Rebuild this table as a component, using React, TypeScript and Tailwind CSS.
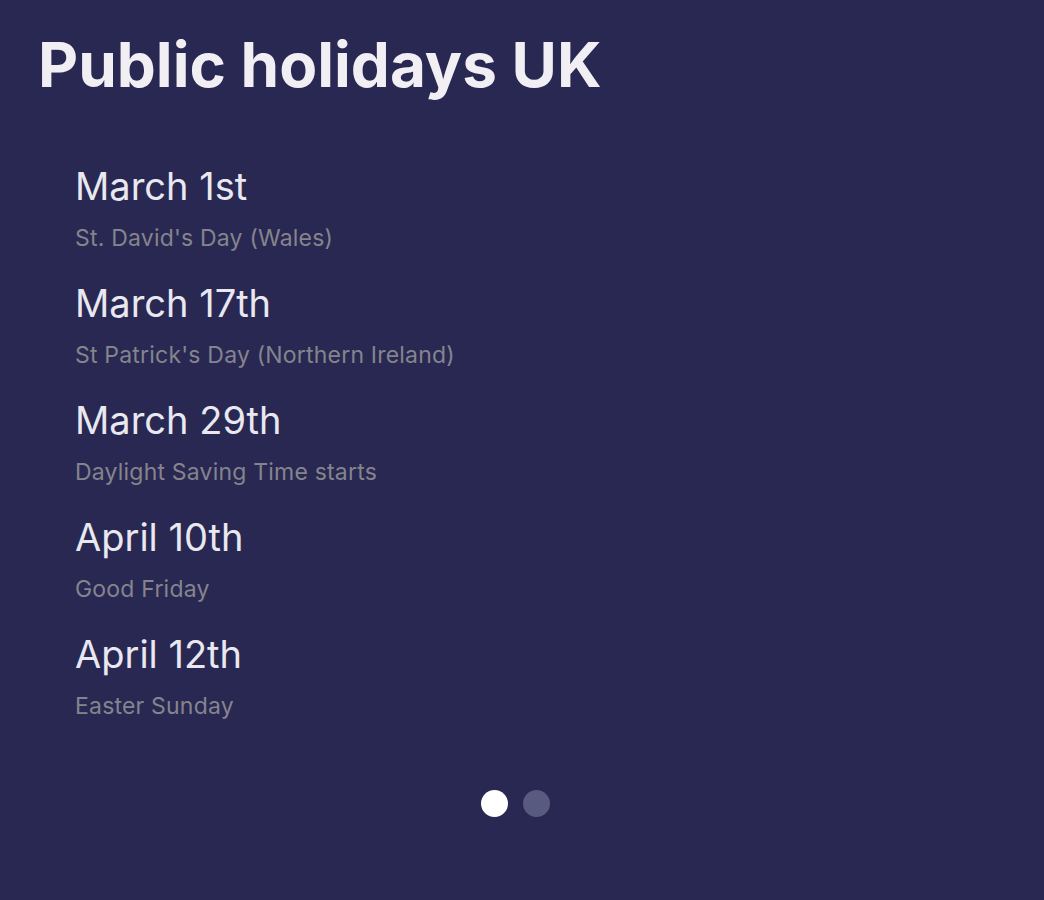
const holidays = [
  { date: "March 1st", name: "St. David's Day (Wales)" },
  { date: "March 17th", name: "St Patrick's Day (Northern Ireland)" },
  { date: "March 29th", name: "Daylight Saving Time starts" },
  { date: "April 10th", name: "Good Friday" },
  { date: "April 12th", name: "Easter Sunday" },
];

export default function App() {
  return (
    <div className="min-h-[900px] w-full bg-[#282852] font-['Inter',sans-serif] pt-[25px]">
      <h1 className="pl-[38px] text-[62px] leading-[80px] font-bold text-[#f1eff4]">
        Public holidays UK
      </h1>
      <ul className="mt-[58px] pl-[75px] flex flex-col">
        {holidays.map((h) => (
          <li key={h.date} className="h-[117px]">
            <div className="text-[38px] leading-[46px] text-[#e9e8f0]">{h.date}</div>
            <div className="mt-[15px] text-[23px] leading-[28px] tracking-[0.2px] text-[#85848d]">
              {h.name}
            </div>
          </li>
        ))}
      </ul>
      <div className="mt-[42px] flex justify-center gap-[15px] pr-[14px]">
        <span className="w-[27px] h-[27px] rounded-full bg-white" />
        <span className="w-[27px] h-[27px] rounded-full bg-[#595a80]" />
      </div>
    </div>
  );
}
